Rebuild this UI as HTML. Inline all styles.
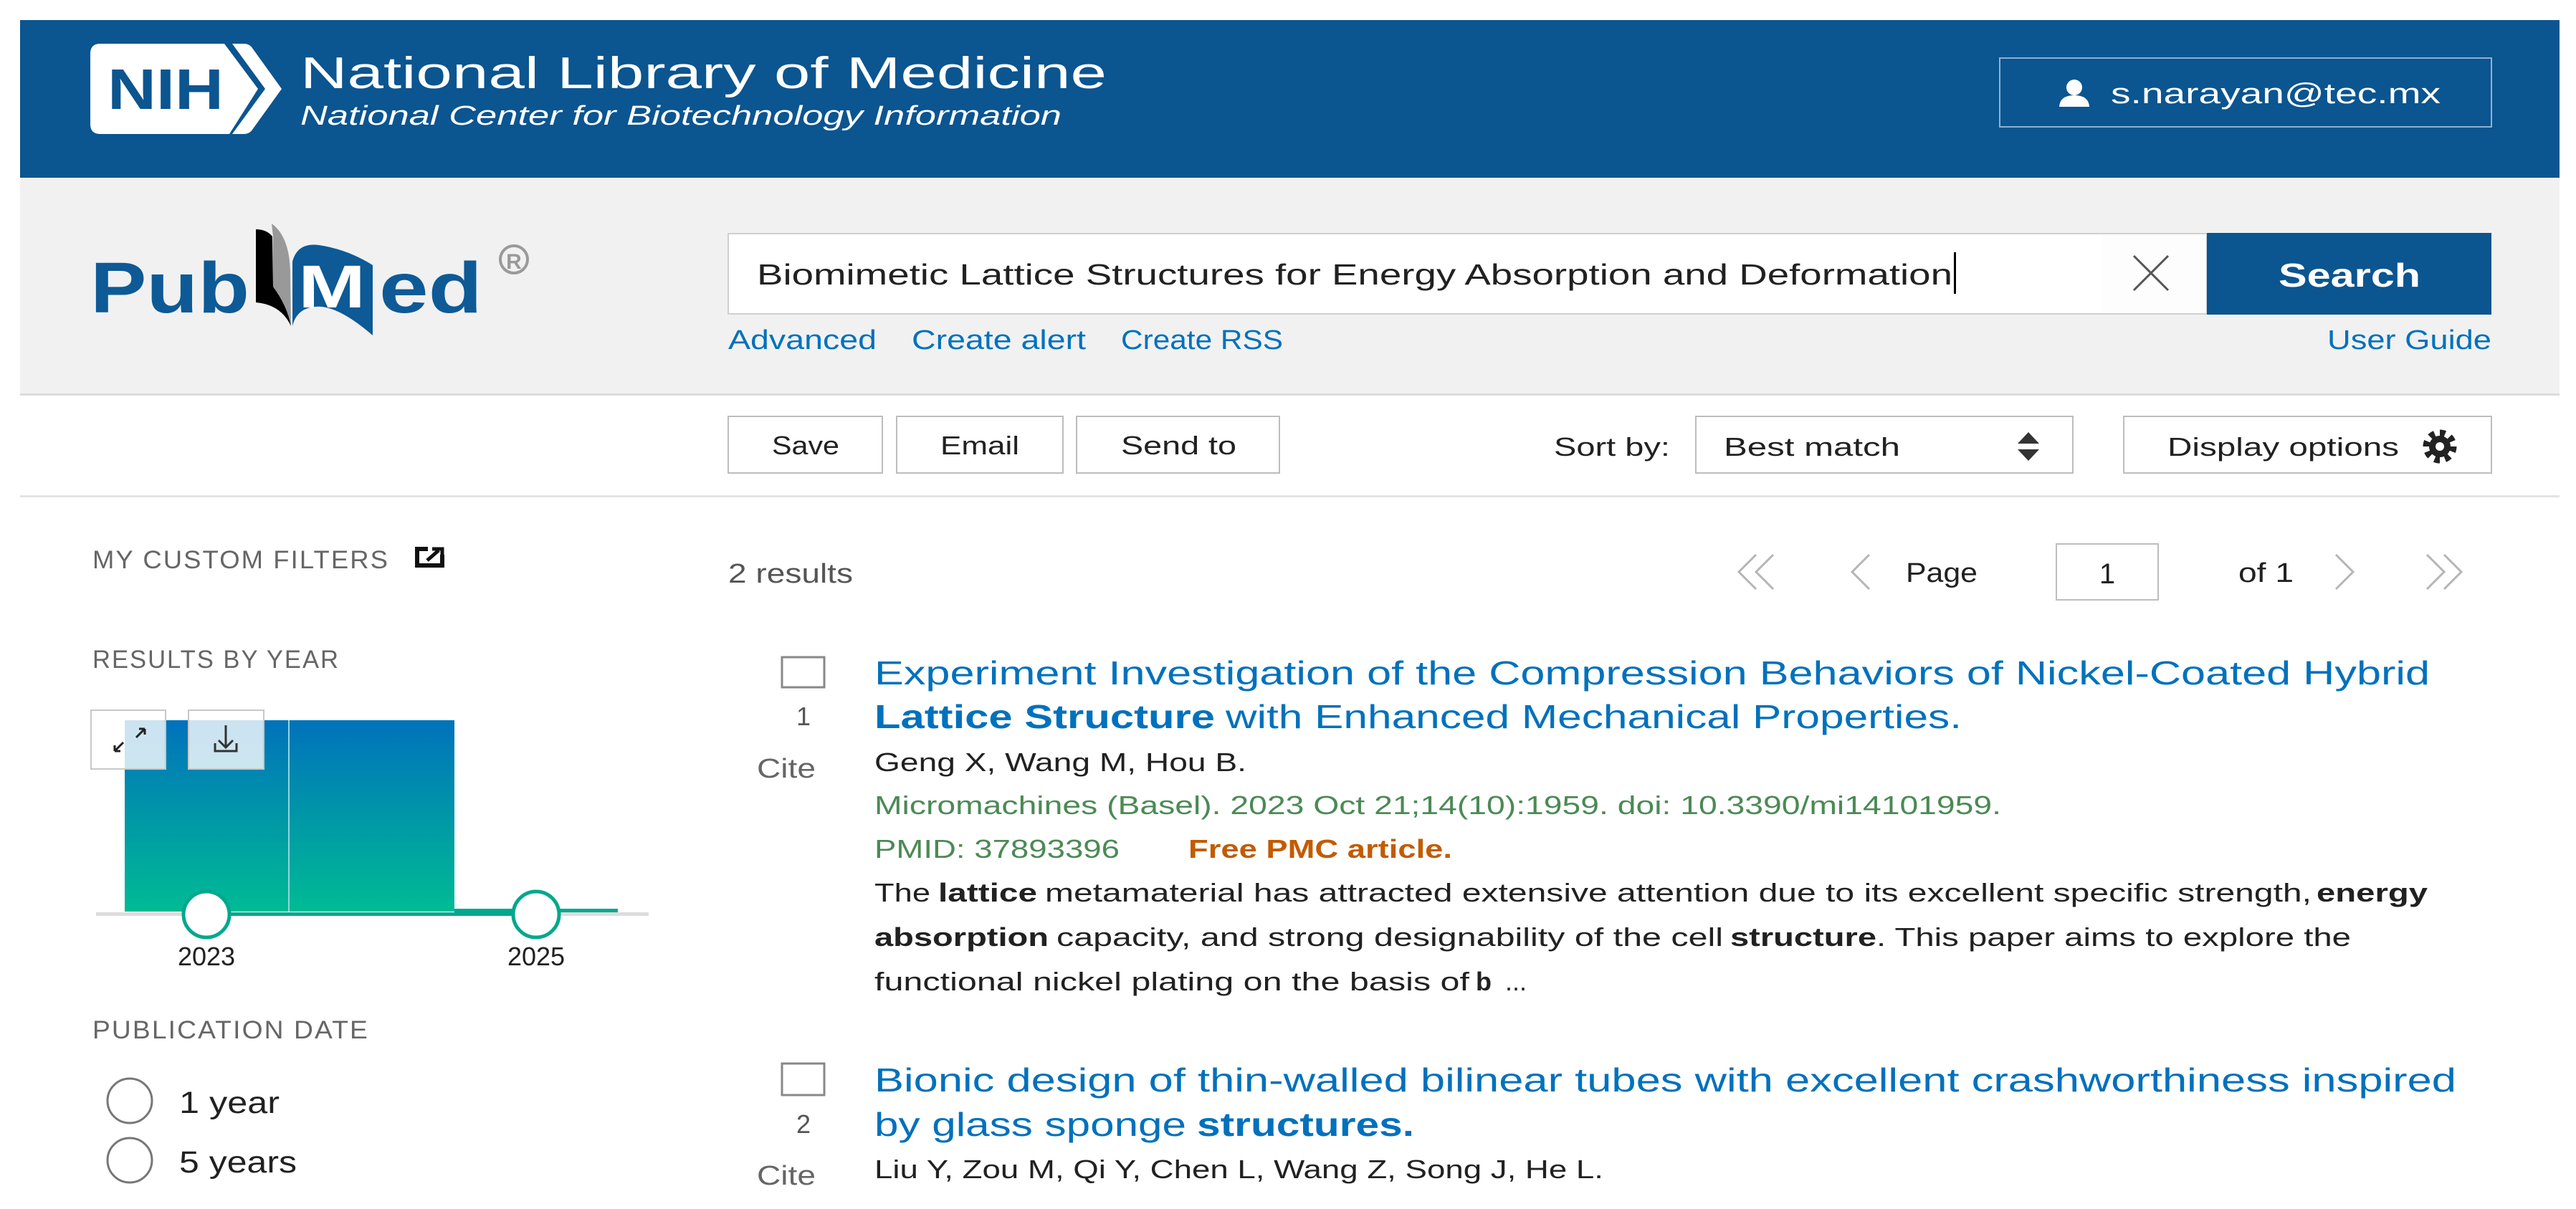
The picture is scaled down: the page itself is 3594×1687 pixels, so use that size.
<!DOCTYPE html>
<html><head><meta charset="utf-8"><style>
html,body{margin:0;padding:0;background:#fff;}
svg{display:block;}
text{font-family:"Liberation Sans",Arial,sans-serif;}
</style></head><body>
<svg width="3594" height="1687" viewBox="0 0 3594 1687" xmlns="http://www.w3.org/2000/svg">
<rect x="0" y="0" width="3594" height="1687" fill="#fff"/>
<!-- header -->
<rect x="28" y="28" width="3543" height="220" fill="#0b5590"/>
<path d="M140 61 L313 61 L360 124 L320 187 L140 187 Q126 187 126 173 L126 75 Q126 61 140 61 Z" fill="#fff"/>
<path d="M324 61 L340 61 Q348 61 352 67 L393 124 L352 181 Q348 187 340 187 L324 187 L370 124 Z" fill="#fff"/>
<text x="150" y="152" font-size="80" font-weight="bold" fill="#0b5590" textLength="162" lengthAdjust="spacingAndGlyphs">NIH</text>
<text x="419" y="123" font-size="62" fill="#fff" textLength="1125" lengthAdjust="spacingAndGlyphs">National Library of Medicine</text>
<text x="419" y="174" font-size="38" font-style="italic" fill="#fff" textLength="1062" lengthAdjust="spacingAndGlyphs">National Center for Biotechnology Information</text>
<rect x="2790" y="81" width="686" height="96" fill="none" stroke="#8eb1d3" stroke-width="2"/>
<circle cx="2894" cy="122" r="11" fill="#fff"/>
<path d="M2873 149 Q2874 133 2894 133 Q2914 133 2915 149 Z" fill="#fff"/>
<text x="2945" y="144" font-size="40" fill="#fff" textLength="460" lengthAdjust="spacingAndGlyphs">s.narayan@tec.mx</text>
<!-- search band -->
<rect x="28" y="248" width="3543" height="302" fill="#f1f1f1"/>
<rect x="28" y="549" width="3543" height="3" fill="#dcdcdc"/>
<text x="126" y="436" font-size="100" font-weight="bold" fill="#0d5a96" textLength="222" lengthAdjust="spacingAndGlyphs">Pub</text>
<path d="M379 312 Q404 330 405 380 L406 455 Q398 420 381 400 L381 330 Z" fill="#999"/>
<path d="M357 320 Q372 320 380 330 L381 400 Q400 425 406 455 Q392 425 357 422 Z" fill="#000"/>
<path d="M408 365 Q415 338 445 342 Q485 348 520 370 L520 468 Q470 425 440 428 Q414 430 408 455 Z" fill="#0d5a96"/>
<text x="416" y="429" font-size="84" font-weight="bold" fill="#fff" textLength="94" lengthAdjust="spacingAndGlyphs">M</text>
<text x="529" y="436" font-size="100" font-weight="bold" fill="#0d5a96" textLength="144" lengthAdjust="spacingAndGlyphs">ed</text>
<circle cx="717" cy="362" r="19" fill="none" stroke="#9a9a9a" stroke-width="4"/>
<text x="717" y="375" font-size="30" font-weight="bold" fill="#9a9a9a" text-anchor="middle">R</text>
<rect x="1016" y="326" width="2063" height="112" fill="#fff" stroke="#cfcfcf" stroke-width="2"/>
<rect x="2933" y="328" width="145" height="108" fill="#fdfdfd"/>
<text x="1056" y="397" font-size="41" fill="#212121" textLength="1668" lengthAdjust="spacingAndGlyphs">Biomimetic Lattice Structures for Energy Absorption and Deformation</text>
<rect x="2726" y="352" width="3" height="58" fill="#000"/>
<path d="M2977 357 L3025 405 M3025 357 L2977 405" stroke="#555" stroke-width="3"/>
<rect x="3079" y="325" width="397" height="114" fill="#0b5590"/>
<text x="3278" y="400" font-size="46" font-weight="bold" fill="#fff" text-anchor="middle" textLength="198" lengthAdjust="spacingAndGlyphs">Search</text>
<g font-size="38" fill="#0071bc">
<text x="1016" y="487" textLength="207" lengthAdjust="spacingAndGlyphs">Advanced</text>
<text x="1272" y="487" textLength="243" lengthAdjust="spacingAndGlyphs">Create alert</text>
<text x="1564" y="487" textLength="226" lengthAdjust="spacingAndGlyphs">Create RSS</text>
<text x="3247" y="487" textLength="229" lengthAdjust="spacingAndGlyphs">User Guide</text>
</g>
<!-- toolbar -->
<g fill="#fff" stroke="#bdbdbd" stroke-width="2">
<rect x="1016" y="581" width="215" height="79"/>
<rect x="1251" y="581" width="232" height="79"/>
<rect x="1502" y="581" width="283" height="79"/>
<rect x="2366" y="581" width="526" height="79"/>
<rect x="2963" y="581" width="513" height="79"/>
</g>
<g font-size="36" fill="#212121">
<text x="1077" y="634" textLength="94" lengthAdjust="spacingAndGlyphs">Save</text>
<text x="1312" y="634" textLength="110" lengthAdjust="spacingAndGlyphs">Email</text>
<text x="1564" y="634" textLength="161" lengthAdjust="spacingAndGlyphs">Send to</text>
<text x="2168" y="636" textLength="162" lengthAdjust="spacingAndGlyphs">Sort by:</text>
<text x="2405" y="636" textLength="246" lengthAdjust="spacingAndGlyphs">Best match</text>
<text x="3024" y="636" textLength="323" lengthAdjust="spacingAndGlyphs">Display options</text>
</g>
<path d="M2815 619 L2830 603 L2845 619 Z M2815 627 L2830 643 L2845 627 Z" fill="#333"/>
<circle cx="3404" cy="623" r="19" fill="none" stroke="#222" stroke-width="9" stroke-dasharray="7.5 7.4"/>
<circle cx="3404" cy="623" r="15" fill="#222"/>
<circle cx="3404" cy="623" r="6" fill="#fff"/>
<rect x="28" y="691" width="3543" height="3" fill="#e3e3e3"/>
<!-- sidebar -->
<g font-size="35" fill="#666" letter-spacing="2">
<text x="129" y="793" textLength="414" lengthAdjust="spacingAndGlyphs">MY CUSTOM FILTERS</text>
<text x="129" y="932" textLength="345" lengthAdjust="spacingAndGlyphs">RESULTS BY YEAR</text>
<text x="129" y="1449" textLength="386" lengthAdjust="spacingAndGlyphs">PUBLICATION DATE</text>
</g>
<path d="M597 766 L582 766 L582 789 L617 789 L617 774" fill="none" stroke="#111" stroke-width="6"/>
<path d="M596 782 L612 768 M603 766 L617 766 L617 780" fill="none" stroke="#111" stroke-width="5"/>
<defs><linearGradient id="g" x1="0" y1="0" x2="0" y2="1"><stop offset="0" stop-color="#0072bb"/><stop offset="1" stop-color="#00bb94"/></linearGradient></defs>
<rect x="174" y="1005" width="460" height="267" fill="url(#g)"/>
<rect x="402" y="1005" width="2" height="267" fill="#8fd6e0"/>
<rect x="134" y="1273" width="771" height="5" fill="#ddd"/>
<rect x="288" y="1273" width="460" height="5" fill="#00a88e"/>
<rect x="634" y="1268" width="228" height="5" fill="#00a88e"/>
<circle cx="288" cy="1276" r="32" fill="#fff" stroke="#00a88e" stroke-width="5"/>
<circle cx="748" cy="1276" r="32" fill="#fff" stroke="#00a88e" stroke-width="5"/>
<rect x="127" y="991" width="104" height="82" fill="#fff" fill-opacity="0.8" stroke="#c8c8c8" stroke-width="2"/>
<rect x="263" y="991" width="105" height="82" fill="#fff" fill-opacity="0.8" stroke="#c8c8c8" stroke-width="2"/>
<path d="M160 1048 L172 1036 M160 1048 L160 1040 M160 1048 L168 1048 M202 1017 L190 1029 M202 1017 L194 1017 M202 1017 L202 1025" stroke="#222" stroke-width="3" fill="none"/>
<path d="M315 1012 L315 1043 M305 1033 L315 1043 L325 1033 M300 1037 L300 1048 L330 1048 L330 1037" stroke="#333" stroke-width="3" fill="none"/>
<g font-size="36" fill="#212121" text-anchor="middle">
<text x="288" y="1347">2023</text>
<text x="748" y="1347">2025</text>
</g>
<circle cx="181" cy="1536" r="31" fill="#fff" stroke="#777" stroke-width="3"/>
<circle cx="181" cy="1619" r="31" fill="#fff" stroke="#777" stroke-width="3"/>
<g font-size="43" fill="#212121">
<text x="250" y="1553" textLength="140" lengthAdjust="spacingAndGlyphs">1 year</text>
<text x="250" y="1636" textLength="164" lengthAdjust="spacingAndGlyphs">5 years</text>
</g>
<!-- results -->
<text x="1016" y="813" font-size="38" fill="#555" textLength="174" lengthAdjust="spacingAndGlyphs">2 results</text>
<path d="M2450 774 L2426 798 L2450 822 M2474 774 L2450 798 L2474 822 M2608 774 L2584 798 L2608 822 M3259 774 L3283 798 L3259 822 M3386 774 L3410 798 L3386 822 M3410 774 L3434 798 L3410 822" fill="none" stroke="#b5b5b5" stroke-width="3"/>
<text x="2659" y="812" font-size="38" fill="#212121" textLength="100" lengthAdjust="spacingAndGlyphs">Page</text>
<rect x="2869" y="759" width="142" height="78" fill="#fff" stroke="#bdbdbd" stroke-width="2"/>
<text x="2940" y="814" font-size="40" fill="#212121" text-anchor="middle">1</text>
<text x="3123" y="812" font-size="38" fill="#212121" textLength="77" lengthAdjust="spacingAndGlyphs">of 1</text>

<rect x="1091" y="917" width="59" height="42" fill="#fff" stroke="#888" stroke-width="3"/>
<text x="1121" y="1012" font-size="36" fill="#555" text-anchor="middle">1</text>
<text x="1056" y="1085" font-size="38" fill="#666" textLength="82" lengthAdjust="spacingAndGlyphs">Cite</text>
<rect x="1091" y="1484" width="59" height="44" fill="#fff" stroke="#888" stroke-width="3"/>
<text x="1121" y="1581" font-size="36" fill="#555" text-anchor="middle">2</text>
<text x="1056" y="1653" font-size="38" fill="#666" textLength="82" lengthAdjust="spacingAndGlyphs">Cite</text>

<g font-size="46" fill="#0071bc">
<text x="1220" y="955" textLength="2170" lengthAdjust="spacingAndGlyphs">Experiment Investigation of the Compression Behaviors of Nickel-Coated Hybrid</text>
<text x="1220" y="1016" font-weight="bold" textLength="475" lengthAdjust="spacingAndGlyphs">Lattice Structure</text>
<text x="1710" y="1016" textLength="1027" lengthAdjust="spacingAndGlyphs">with Enhanced Mechanical Properties.</text>
<text x="1220" y="1523" textLength="2207" lengthAdjust="spacingAndGlyphs">Bionic design of thin-walled bilinear tubes with excellent crashworthiness inspired</text>
<text x="1220" y="1585" textLength="435" lengthAdjust="spacingAndGlyphs">by glass sponge</text>
<text x="1670" y="1585" font-weight="bold" textLength="303" lengthAdjust="spacingAndGlyphs">structures.</text>
</g>
<g font-size="36" fill="#212121">
<text x="1220" y="1076" textLength="519" lengthAdjust="spacingAndGlyphs">Geng X, Wang M, Hou B.</text>
<text x="1220" y="1644" textLength="1017" lengthAdjust="spacingAndGlyphs">Liu Y, Zou M, Qi Y, Chen L, Wang Z, Song J, He L.</text>
<text x="1220" y="1258" textLength="78" lengthAdjust="spacingAndGlyphs">The</text>
<text x="1309" y="1258" font-weight="bold" textLength="138" lengthAdjust="spacingAndGlyphs">lattice</text>
<text x="1458" y="1258" textLength="1767" lengthAdjust="spacingAndGlyphs">metamaterial has attracted extensive attention due to its excellent specific strength,</text>
<text x="3232" y="1258" font-weight="bold" textLength="155" lengthAdjust="spacingAndGlyphs">energy</text>
<text x="1220" y="1320" font-weight="bold" textLength="243" lengthAdjust="spacingAndGlyphs">absorption</text>
<text x="1474" y="1320" textLength="930" lengthAdjust="spacingAndGlyphs">capacity, and strong designability of the cell</text>
<text x="2414" y="1320" font-weight="bold" textLength="204" lengthAdjust="spacingAndGlyphs">structure</text>
<text x="2618" y="1320" textLength="662" lengthAdjust="spacingAndGlyphs">. This paper aims to explore the</text>
<text x="1220" y="1382" textLength="830" lengthAdjust="spacingAndGlyphs">functional nickel plating on the basis of</text>
<text x="2059" y="1382" font-weight="bold">b</text>
<text x="2100" y="1382">...</text>
</g>
<g font-size="36" fill="#4b8a55">
<text x="1220" y="1136" textLength="1572" lengthAdjust="spacingAndGlyphs">Micromachines (Basel). 2023 Oct 21;14(10):1959. doi: 10.3390/mi14101959.</text>
<text x="1220" y="1197" textLength="342" lengthAdjust="spacingAndGlyphs">PMID: 37893396</text>
</g>
<text x="1658" y="1197" font-size="36" font-weight="bold" fill="#c35b00" textLength="368" lengthAdjust="spacingAndGlyphs">Free PMC article.</text>
</svg>
</body></html>
